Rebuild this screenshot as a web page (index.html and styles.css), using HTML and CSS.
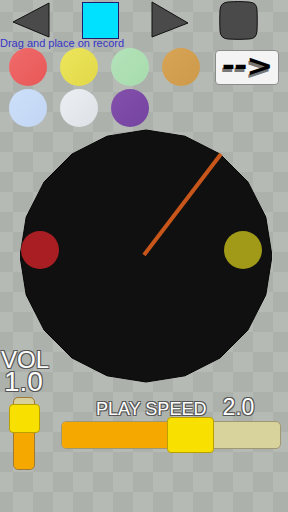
FILE: index.html
```html
<!DOCTYPE html>
<html lang="en">
<head>
    <meta charset="UTF-8">
    <meta name="viewport" content="width=device-width, initial-scale=1.0">
    <title>Record Mixer</title>
    <link rel="stylesheet" href="styles.css">
</head>
<body>
    <div id="app">
        <div class="toolbar">
            <svg class="tool prev" width="38" height="36" viewBox="0 0 38 36">
                <polygon points="1,20 37,1 37,35" fill="#4a4a4a" stroke="#111" stroke-width="1"/>
            </svg>
            <div class="tool stop"></div>
            <svg class="tool next" width="38" height="37" viewBox="0 0 38 37">
                <polygon points="1,1 37,22 1,36" fill="#4a4a4a" stroke="#111" stroke-width="1"/>
            </svg>
            <svg class="tool pause" width="39" height="39" viewBox="0 0 39 39">
                <path d="M9 1 Q19.5 0 30 1 Q38 1.5 38 9 Q38.6 19.5 38 30 Q37.5 38 30 38 Q19.5 38.8 9 38 Q1.5 37.5 1 30 Q0.4 19.5 1 9 Q1.5 1.5 9 1 Z" fill="#4a4a4a" stroke="#111" stroke-width="1"/>
            </svg>
        </div>
        <p class="hint">Drag and place on record</p>
        <div class="palette">
            <div class="dot red"></div>
            <div class="dot yellow"></div>
            <div class="dot green"></div>
            <div class="dot orange"></div>
            <button class="next-btn"><span>--&gt;</span></button>
            <div class="dot blue"></div>
            <div class="dot white"></div>
            <div class="dot purple"></div>
        </div>
        <svg class="record" width="252" height="256" viewBox="-126 -127 252 256">
            <polygon fill="#101010" stroke="#050505" stroke-width="1"
                points="126,0 119.8,38.9 101.9,74.1 74.1,101.9 38.9,119.8 0,126 -38.9,119.8 -74.1,101.9 -101.9,74.1 -119.8,38.9 -126,0 -119.8,-38.9 -101.9,-74.1 -74.1,-101.9 -38.9,-119.8 0,-126 38.9,-119.8 74.1,-101.9 101.9,-74.1 119.8,-38.9"/>
            <circle cx="-106" cy="-6" r="19" fill="#a81e22"/>
            <circle cx="97" cy="-6" r="19" fill="#a09a18"/>
            <line x1="-2" y1="-1" x2="75" y2="-102" stroke="#c8561a" stroke-width="4"/>
        </svg>
        <div class="controls">
            <div class="vol">
                <div class="vol-label">VOL</div>
                <div class="vol-value">1.0</div>
                <div class="vol-track">
                    <div class="vol-handle"></div>
                </div>
            </div>
            <div class="speed">
                <div class="speed-label">
                    <span class="speed-title">PLAY SPEED</span>
                    <span class="speed-value">2.0</span>
                </div>
                <div class="speed-track">
                    <div class="speed-fill"></div>
                    <div class="speed-handle"></div>
                </div>
            </div>
        </div>
    </div>
</body>
</html>
```

FILE: styles.css
```css
body {
    margin: 0;
    width: 288px;
    height: 512px;
    overflow: hidden;
    font-family: "Liberation Sans", Arial, sans-serif;
    background-color: #b6bab5;
    background-image: repeating-conic-gradient(#adb1ac 0 25%, #b6bab5 0 50%);
    background-size: 40px 40px;
    background-position: 13px 12px;
}
#app {
    display: flex;
    flex-direction: column;
}

/* top buttons */
.toolbar {
    display: flex;
    align-items: flex-start;
    padding-left: 12px;
    height: 40px;
}
.tool { display: block; flex: none; }
.prev { margin-top: 2px; }
.stop {
    margin-left: 32px;
    margin-top: 2px;
    width: 35px;
    height: 35px;
    background: #00e0ff;
    border: 1px solid #1c1c70;
}
.next { margin-left: 32px; margin-top: 1px; }
.pause { margin-left: 30px; margin-top: 1px; }

.hint {
    margin: -3px 0 0;
    font-size: 11px;
    line-height: 12px;
    color: #3535c8;
    white-space: nowrap;
}

/* colour palette */
.palette {
    display: grid;
    grid-template-columns: repeat(4, 38px) 64px;
    grid-auto-rows: 38px;
    column-gap: 13px;
    row-gap: 3px;
    padding-left: 9px;
    margin-top: -1px;
}
.dot {
    width: 38px;
    height: 38px;
    border-radius: 50%;
}
.red { background: linear-gradient(135deg, #f06a6a, #e85858); }
.yellow { background: linear-gradient(135deg, #ece65c, #e2d848); }
.green { background: linear-gradient(135deg, #b4e2b8, #a6dcae); }
.orange { background: linear-gradient(135deg, #d8a456, #cc9a4a); }
.blue { background: linear-gradient(135deg, #cce0fa, #c2d6f4); }
.white { background: linear-gradient(135deg, #eceff2, #dde1e6); }
.purple { background: linear-gradient(135deg, #8450ac, #7444a0); }

.next-btn {
    margin: 2px 0 0 2px;
    width: 64px;
    height: 35px;
    padding: 0;
    background: #f4f4f4;
    border: 1px solid #8c8c8c;
    border-radius: 4px;
    display: flex;
    align-items: center;
    justify-content: center;
}
.next-btn span {
    display: inline-block;
    font-family: "DejaVu Sans", "Liberation Sans", sans-serif;
    font-weight: bold;
    font-size: 28px;
    line-height: 30px;
    letter-spacing: -1px;
    color: #000;
    text-shadow: -1px 2px 0 #777;
    transform: scale(1.15, 1.05);
    margin-top: -2px;
}

/* record */
.record {
    display: block;
    margin: 2px 0 0 20px;
}

/* sliders */
.controls {
    display: flex;
    margin-top: -35px;
}
.vol {
    width: 48px;
    flex: none;
}
.vol-label, .vol-value, .speed-label {
    color: #fff;
    text-shadow: 1px 1px 0 #555, -1px -1px 0 #555, 1px -1px 0 #555, -1px 1px 0 #555;
}
.vol-label {
    font-size: 24px;
    line-height: 20px;
    padding-left: 1px;
}
.vol-value {
    font-size: 28px;
    line-height: 24px;
    padding-left: 4px;
}
.vol-track {
    position: relative;
    margin: 3px 0 0 13px;
    width: 22px;
    height: 73px;
    box-sizing: border-box;
    border: 1px solid #a07a30;
    border-radius: 5px;
    background: linear-gradient(#d8d09c 0 28%, #f5a800 28%);
}
.vol-handle {
    position: absolute;
    left: -5px;
    top: 6px;
    width: 31px;
    height: 29px;
    box-sizing: border-box;
    background: #f8e000;
    border: 1px solid #b8a000;
    border-radius: 4px;
}
.speed {
    margin-left: 13px;
    padding-top: 46px;
}
.speed-label {
    display: flex;
    align-items: baseline;
    padding-left: 35px;
    height: 22px;
}
.speed-title {
    font-size: 18px;
    line-height: 22px;
}
.speed-value {
    margin-left: 16px;
    font-size: 23px;
    line-height: 22px;
}
.speed-track {
    position: relative;
    display: flex;
    margin-top: 3px;
    width: 220px;
    height: 28px;
    box-sizing: border-box;
    border: 1px solid #a09870;
    border-radius: 5px;
    background: #d8d29c;
}
.speed-fill {
    width: 106px;
    background: #f5a800;
    border-radius: 4px 0 0 4px;
}
.speed-handle {
    position: absolute;
    left: 105px;
    top: -5px;
    width: 47px;
    height: 36px;
    box-sizing: border-box;
    background: #f8e000;
    border: 1px solid #b8a000;
    border-radius: 4px;
}
```
